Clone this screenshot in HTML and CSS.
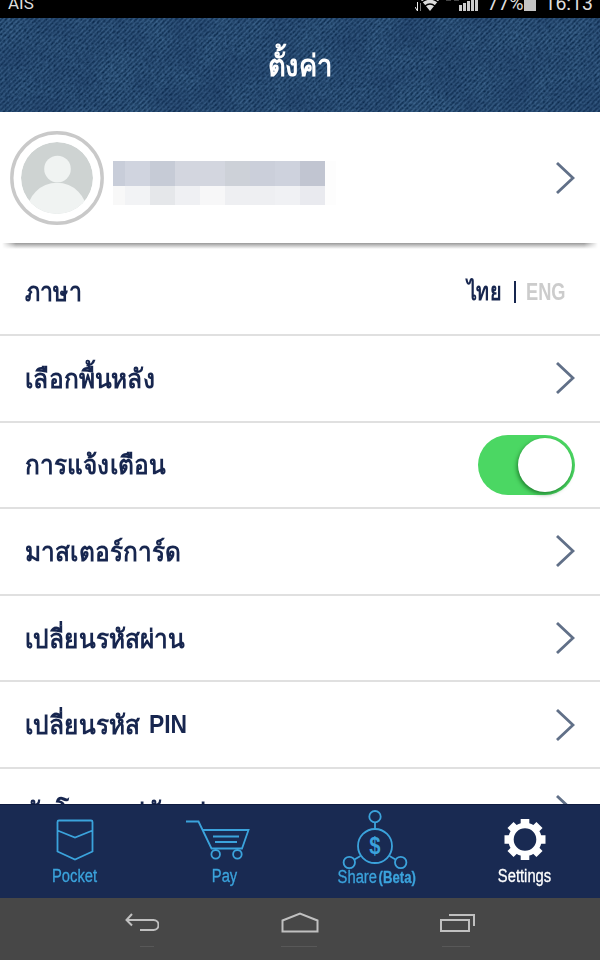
FILE: index.html
```html
<!DOCTYPE html>
<html lang="th">
<head>
    <meta charset="UTF-8">
    <meta name="viewport" content="width=device-width, initial-scale=1.0">
    <title>ตั้งค่า</title>
    <link rel="stylesheet" href="styles.css">
</head>
<body>
    <div class="screen">
        <div class="status-bar">
            <span class="carrier">AIS</span>
            <svg class="status-icons" width="66" height="18" viewBox="0 0 66 18">
                <path d="M2.5 2v8M0 7l2.5 4V3" stroke="#eee" fill="none"/>
                <path d="M5.5 3v8" stroke="#777"/>
                <path d="M6 0Q15-7 24 0L15 11Z" fill="#ddd"/>
                <path d="M7 2q8-6 16 0M10 6q5-4 10 0" stroke="#000" stroke-width="1.3" fill="none"/>
                <path d="M31 0h5M39 0h5" stroke="#888"/>
                <path d="M44 5h3v6h-3zM48 3h3v8h-3zM52 1h3v10h-3zM56 0h3v11h-3zM60 0h3v11h-3z" fill="#ccc"/>
            </svg>
            <span class="battery-text">77%</span>
            <span class="battery"></span>
            <span class="clock">16:13</span>
        </div>

        <header class="header">
            <svg class="denim" width="600" height="94">
                <filter id="weave" x="0" y="0" width="100%" height="100%" color-interpolation-filters="sRGB">
                    <feTurbulence type="fractalNoise" baseFrequency="0.37" numOctaves="3" seed="4"/>
                    <feColorMatrix values="0.2 0 0 0 0.015  0.24 0 0 0 0.13  0.27 0 0 0 0.26  0 0 0 0 1"/>
                </filter>
                <filter id="fade" x="0" y="0" width="100%" height="100%" color-interpolation-filters="sRGB">
                    <feTurbulence type="fractalNoise" baseFrequency="0.03" numOctaves="2" seed="9"/>
                    <feColorMatrix values="0 0 0 0 0.08  0 0 0 0 0.18  0 0 0 0 0.34  0.6 0 0 0 -0.17"/>
                </filter>
                <pattern id="twill" width="5" height="5" patternUnits="userSpaceOnUse">
                    <path d="M-1 1L1-1M0 5L5 0M4 6L6 4" stroke="#5580aa" stroke-width="1.5" opacity=".42"/>
                </pattern>
                <rect width="600" height="94" filter="url(#weave)"/>
                <rect width="600" height="94" fill="url(#twill)"/>
                <rect width="600" height="94" filter="url(#fade)"/>
            </svg>
            <h1>ตั้งค่า</h1>
        </header>

        <section class="profile">
            <svg class="avatar" width="94" height="94" viewBox="0 0 94 94">
                <clipPath id="face"><circle cx="47" cy="47" r="36"/></clipPath>
                <circle cx="47" cy="47" r="45.2" fill="#fff" stroke="#c9c9c9" stroke-width="3.4"/>
                <g clip-path="url(#face)">
                    <circle cx="47" cy="47" r="36" fill="#ced3d2"/>
                    <circle cx="47.5" cy="38" r="13.3" fill="#f0f3f2"/>
                    <circle cx="47" cy="82" r="30.2" fill="#f0f3f2"/>
                </g>
            </svg>
            <svg class="masked-name" width="223" height="44" viewBox="0 0 223 44" shape-rendering="crispEdges">
                <path fill="#c8cdd9" d="M0 0h12v25H0z"/>
                <path fill="#d0d4df" d="M12 0h25v25H12z"/>
                <path fill="#c6cbd6" d="M37 0h25v25H37z"/>
                <path fill="#d3d6df" d="M62 0h50v25H62z"/>
                <path fill="#cdd1d8" d="M112 0h25v25h-25z"/>
                <path fill="#cbcfda" d="M137 0h25v25h-25z"/>
                <path fill="#ced2dd" d="M162 0h25v25h-25z"/>
                <path fill="#c1c5d1" d="M187 0h25v25h-25z"/>
                <path fill="#f8f8f8" d="M0 25h12v19H0z"/>
                <path fill="#f2f3f5" d="M12 25h25v19H12z"/>
                <path fill="#e5e7ea" d="M37 25h25v19H37z"/>
                <path fill="#eff0f3" d="M62 25h25v19H62z"/>
                <path fill="#f7f7f8" d="M87 25h25v19H87z"/>
                <path fill="#eeeff2" d="M112 25h50v19h-50z"/>
                <path fill="#f0f1f4" d="M162 25h25v19h-25z"/>
                <path fill="#e9eaef" d="M187 25h25v19h-25z"/>
                <path fill="#fdfdfd" d="M212 0h11v44h-11z"/>
            </svg>
            <svg class="chevron" width="20" height="34" viewBox="0 0 20 34"><path d="M2 2l16 15L2 32"/></svg>
        </section>

        <main class="settings-list">
            <div class="row">
                <span class="label narrow">ภาษา</span>
                <div class="language">
                    <span class="thai">ไทย</span>
                    <span class="divider"></span>
                    <span class="eng">ENG</span>
                </div>
            </div>
            <div class="row">
                <span class="label">เลือกพื้นหลัง</span>
                <svg class="chevron" width="20" height="34" viewBox="0 0 20 34"><path d="M2 2l16 15L2 32"/></svg>
            </div>
            <div class="row">
                <span class="label">การแจ้งเตือน</span>
                <div class="toggle"><span class="knob"></span></div>
            </div>
            <div class="row">
                <span class="label">มาสเตอร์การ์ด</span>
                <svg class="chevron" width="20" height="34" viewBox="0 0 20 34"><path d="M2 2l16 15L2 32"/></svg>
            </div>
            <div class="row">
                <span class="label">เปลี่ยนรหัสผ่าน</span>
                <svg class="chevron" width="20" height="34" viewBox="0 0 20 34"><path d="M2 2l16 15L2 32"/></svg>
            </div>
            <div class="row">
                <span class="label">เปลี่ยนรหัส</span><span class="latin">PIN</span>
                <svg class="chevron" width="20" height="34" viewBox="0 0 20 34"><path d="M2 2l16 15L2 32"/></svg>
            </div>
            <div class="row">
                <span class="label">อัพโหลดรูปบัตรปชช</span>
                <svg class="chevron" width="20" height="34" viewBox="0 0 20 34"><path d="M2 2l16 15L2 32"/></svg>
            </div>
        </main>

        <nav class="tab-bar">
            <div class="tab">
                <svg width="70" height="56" viewBox="0 0 70 56">
                    <path d="M19 15.5h32q1.5 0 1.5 1.5v29.5L35 54.5 17.500 46.500V17q0-1.500 1.500-1.500zM17.500 25.500L35 32.500l17.500-7"/>
                </svg>
                <span class="tab-label">Pocket</span>
            </div>
            <div class="tab">
                <svg width="70" height="56" viewBox="0 0 70 56">
                    <path d="M-4 16.500H8.500L21.500 43.500H52L58.500 25H12.800M23 31.500h26M25 37h22"/>
                    <circle cx="25.700" cy="49.300" r="4.300"/>
                    <circle cx="47.400" cy="49.300" r="4.300"/>
                </svg>
                <span class="tab-label">Pay</span>
            </div>
            <div class="tab share">
                <svg width="74" height="60" viewBox="0 0 74 60">
                    <circle cx="37" cy="41" r="17"/>
                    <circle cx="37" cy="11.700" r="5.700"/>
                    <circle cx="11.300" cy="57.500" r="5.700"/>
                    <circle cx="62.700" cy="57.500" r="5.700"/>
                    <path d="M37 17.700V24M22.500 51l-6 3.500M51.500 51l6 3.500"/>
                    <text x="42" y="49" transform="scale(.88 1)">$</text>
                </svg>
                <span class="tab-label">Share<b>(Beta)</b></span>
            </div>
            <div class="tab active">
                <svg width="70" height="56" viewBox="0 0 70 56">
                    <g class="gear">
                        <path id="teeth" d="M30.700 14h8.600v8h-8.600zM30.700 47h8.600v8h-8.600zM14.500 30.200h8v8.600h-8zM47.500 30.200h8v8.600h-8z"/>
                        <use href="#teeth" transform="rotate(45 35 34.500)"/>
                    </g>
                    <circle class="gear-ring" cx="35" cy="34.500" r="14"/>
                </svg>
                <span class="tab-label">Settings</span>
            </div>
        </nav>

        <footer class="system-bar">
            <svg width="34" height="36" viewBox="0 0 34 36">
                <path d="M7 2L1.500 8 7 13.500M2 8h26.500a4.700 4.700 0 0 1 0 10H15"/>
                <path class="hint" d="M15 34.500h14"/>
            </svg>
            <svg width="38" height="36" viewBox="0 0 38 36">
                <path d="M1.500 19.500V8.500L19 1.500 36.500 8.500v11z"/>
                <path class="hint" d="M0 34.500h36"/>
            </svg>
            <svg width="36" height="36" viewBox="0 0 36 36">
                <path d="M1 8h28v11H1zM9 3h25v11"/>
                <path class="hint" d="M2 34.500h28"/>
            </svg>
        </footer>
    </div>
</body>
</html>
```
FILE: styles.css
```css
:root {
    --navy: #17264f;
    --tab-bg: #192a52;
    --tab-blue: #3ba3dc;
    --line: #e0e0e0;
}

* {
    box-sizing: border-box;
}

body {
    margin: 0;
    font-family: "Liberation Sans", Arial, sans-serif;
    color: var(--navy);
    background: #fff;
}

.screen {
    display: flex;
    flex-direction: column;
    width: 600px;
    height: 960px;
    overflow: hidden;
}

.status-bar {
    display: flex;
    flex: none;
    height: 18px;
    padding: 0 7px 0 8px;
    overflow: hidden;
    background: #000;
    color: #ddd;
    font-family: Roboto, sans-serif;
    font-size: 19.5px;
    line-height: 8px;
}

.carrier {
    font-size: 17px;
    line-height: 6px;
}

.status-icons {
    flex: none;
    margin-left: auto;
}

.battery-text {
    margin-left: 6px;
}

.battery {
    width: 12px;
    height: 11px;
    margin: 0 8px 0 1px;
    background: #c4c4c4;
}

.header {
    position: relative;
    display: flex;
    flex: none;
    justify-content: center;
    align-items: center;
    height: 94px;
    background: #234871;
    overflow: hidden;
}

.denim {
    position: absolute;
    top: 0;
    left: 0;
}

h1 {
    position: relative;
    margin: 0;
    font-size: 30px;
    color: #fff;
    transform: scaleX(0.91);
}

.profile {
    display: flex;
    flex: none;
    align-items: center;
    height: 132px;
    padding: 0 25px 0 10px;
    position: relative;
}

.profile::after {
    content: "";
    position: absolute;
    left: 2px;
    right: 2px;
    bottom: -5px;
    height: 6px;
    background: linear-gradient(#999, #ccc 50%, #fff);
    -webkit-mask: linear-gradient(90deg, transparent, #000 14px, #000 582px, transparent);
    mask: linear-gradient(90deg, transparent, #000 14px, #000 582px, transparent);
}

.masked-name {
    margin: 10px 0 0 9px;
}

.chevron {
    flex: none;
    margin-left: auto;
    fill: none;
    stroke: #617088;
    stroke-width: 2.9;
}

.settings-list {
    flex: 1;
    min-height: 0;
    padding-top: 5.4px;
    overflow: hidden;
}

.row {
    display: flex;
    align-items: center;
    height: 86.6px;
    padding: 0 25px;
    border-bottom: 2px solid var(--line);
}

.label {
    font-size: 26px;
    font-weight: bold;
    white-space: nowrap;
    transform: scaleX(0.94);
    transform-origin: left;
}

.label.narrow {
    transform: scaleX(0.89);
}

.latin {
    margin-left: 2px;
    font-size: 26px;
    font-weight: bold;
    transform: scaleX(0.88);
    transform-origin: left;
}

.language {
    display: flex;
    align-items: center;
    margin-left: auto;
    margin-right: 10px;
    font-size: 24px;
    font-weight: bold;
}

.thai {
    transform: scaleX(0.82);
    transform-origin: right;
}

.divider {
    width: 2px;
    height: 22px;
    margin: 0 10px 0 13px;
    background: var(--navy);
}

.eng {
    width: 39px;
    color: #ccc;
    transform: scaleX(0.76);
    transform-origin: left;
}

.toggle {
    display: flex;
    justify-content: flex-end;
    width: 97px;
    height: 60px;
    margin-left: auto;
    padding: 3px;
    border-radius: 30px;
    background: #4bd763;
}

.knob {
    width: 54px;
    height: 54px;
    border-radius: 50%;
    background: #fff;
    box-shadow: -1px 2px 4px rgba(0, 70, 10, 0.6);
}

.tab-bar {
    display: flex;
    flex: none;
    height: 94px;
    border-top: 1px solid #0f1c40;
    background: var(--tab-bg);
}

.tab {
    display: flex;
    flex: 1;
    flex-direction: column;
    align-items: center;
    color: var(--tab-blue);
}

.tab svg {
    flex: none;
    overflow: visible;
    fill: none;
    stroke: currentColor;
    stroke-width: 1.8;
}

.tab svg text {
    fill: currentColor;
    stroke: none;
    font-size: 23px;
    font-weight: bold;
    text-anchor: middle;
}

.tab-label {
    margin-top: 3px;
    font-size: 18px;
    line-height: 24px;
    white-space: nowrap;
    transform: scaleX(0.82);
    -webkit-text-stroke: 0.3px currentColor;
}

.share .tab-label {
    margin: 0 0 0 4px;
}

.share b {
    margin-left: 2px;
    font-size: 16px;
}

.active {
    color: #fff;
}

.gear {
    fill: #fff;
    stroke: none;
}

.tab .gear-ring {
    stroke-width: 5.4;
}

.system-bar {
    display: flex;
    flex: none;
    justify-content: space-between;
    height: 62px;
    padding: 14px 124px 0 125px;
    background: #474747;
}

.system-bar svg {
    fill: none;
    stroke: #c0c0c0;
    stroke-width: 2;
}

.system-bar .hint {
    stroke: #585858;
    stroke-width: 1;
}
```
